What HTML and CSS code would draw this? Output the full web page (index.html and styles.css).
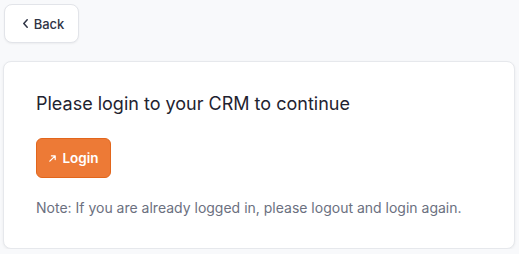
FILE: index.html
```html
<!DOCTYPE html>
<html>
<head>
<meta charset="utf-8">
<link rel="stylesheet" href="styles.css">
</head>
<body>
<div class="page">
  <button class="back-btn"><svg class="chev" width="5" height="9" viewBox="0 0 5 9"><path d="M4.2 0.8 L0.8 4.5 L4.2 8.2" fill="none" stroke="#2f3445" stroke-width="1.5" stroke-linecap="round" stroke-linejoin="round"/></svg><span>Back</span></button>
  <div class="card">
    <h2 class="title">Please login to your CRM to continue</h2>
    <button class="login-btn"><svg class="arrow" width="7" height="7" viewBox="0 0 7 7"><path d="M0.8 6.2 L6.2 0.8 M2.4 0.8 H6.2 V4.6" fill="none" stroke="#fff" stroke-width="1.2" stroke-linecap="round" stroke-linejoin="round"/></svg><span>Login</span></button>
    <p class="note">Note: If you are already logged in, please logout and login again.</p>
  </div>
</div>
</body>
</html>
```
FILE: styles.css
```css
html, body {
  margin: 0;
  padding: 0;
  background: #f8f9fb;
  font-family: Inter, "Noto Sans", sans-serif;
}
.page {
  padding: 4px 4px 0 3px;
  display: flex;
  flex-direction: column;
  align-items: flex-start;
  gap: 18px;
}
.back-btn {
  margin-left: 1px;
  width: 75px;
  height: 39px;
  background: #fff;
  border: 1px solid #e2e4e9;
  border-radius: 8px;
  box-shadow: 0 1px 2px rgba(0,0,0,0.05);
  font-family: Inter, sans-serif;
  font-size: 13px;
  font-weight: 500;
  color: #2f3445;
  display: flex;
  align-items: center;
  justify-content: center;
  gap: 6px;
  padding: 0 0 0 4px;
}
.chev {
  display: block;
}
.card {
  box-sizing: border-box;
  width: 512px;
  height: 188px;
  background: #fff;
  border: 1px solid #e6e8ec;
  border-radius: 8px;
  box-shadow: 0 1px 3px rgba(0,0,0,0.06);
  padding: 28px 32px;
}
.title {
  margin: 0;
  font-size: 18px;
  line-height: 28px;
  font-weight: 400;
  color: #1f2330;
}
.login-btn {
  margin-top: 20px;
  width: 75px;
  height: 40px;
  background: #ed7a36;
  border: 1px solid #e2661c;
  border-radius: 6px;
  color: #fff;
  font-family: Inter, sans-serif;
  font-size: 13.5px;
  font-weight: 600;
  display: flex;
  align-items: center;
  justify-content: center;
  gap: 6px;
  padding: 0 0 0 1px;
}
.arrow {
  display: block;
}
.note {
  margin: 20px 0 0;
  font-size: 14px;
  line-height: 20px;
  color: #6b7080;
}
```
